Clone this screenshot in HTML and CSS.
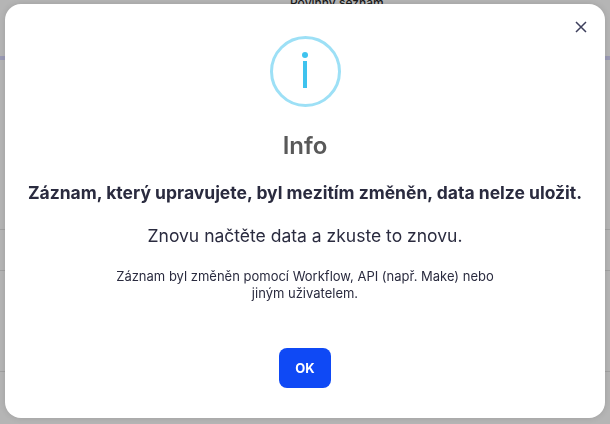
FILE: index.html
```html
<!DOCTYPE html>
<html lang="cs">
<head>
  <meta charset="UTF-8">
  <meta name="viewport" content="width=device-width, initial-scale=1.0">
  <title>Info</title>
  <link rel="stylesheet" href="styles.css">
</head>
<body>
  <div class="page">
    <div class="page-title">Povinný seznam</div>
    <div class="page-tabs"></div>
    <div class="page-row page-row-first"></div>
    <div class="page-row page-row-second"></div>
    <div class="page-row page-row-third"></div>
  </div>

  <div class="modal">
    <button class="modal-close" aria-label="Zavřít">
      <svg width="12" height="12" viewBox="0 0 12 12">
        <path d="M1 1L11 11M11 1L1 11" stroke="#3d3f5c" stroke-width="1.5" fill="none"/>
      </svg>
    </button>

    <div class="modal-icon">
      <span class="modal-icon-dot"></span>
      <span class="modal-icon-bar"></span>
    </div>

    <h2 class="modal-title">Info</h2>
    <p class="modal-lead">Záznam, který upravujete, byl mezitím změněn, data nelze uložit.</p>
    <p class="modal-text">Znovu načtěte data a zkuste to znovu.</p>
    <p class="modal-note">Záznam byl změněn pomocí Workflow, API (např. Make) nebo jiným uživatelem.</p>

    <button class="modal-ok">OK</button>
  </div>
</body>
</html>
```

FILE: styles.css
```css
html, body {
  height: 100%;
}
body {
  margin: 0;
  background: #b5b5b5;
  font-family: Inter, "Liberation Sans", sans-serif;
  overflow: hidden;
}
.page {
  display: flex;
  flex-direction: column;
}
.page-title {
  height: 4px;
  padding-left: 290px;
  line-height: 6px;
  overflow: hidden;
  font-size: 12px;
  font-weight: 500;
  color: #1a1a1a;
}
.page-tabs {
  height: 4px;
  margin-top: 52px;
  background: #9b9bb5;
}
.page-row {
  height: 1px;
  background: #a2a2a2;
}
.page-row-first {
  margin-top: 169px;
}
.page-row-second {
  margin-top: 40px;
}
.page-row-third {
  margin-top: 100px;
}
.modal {
  position: absolute;
  top: 4px;
  left: 5px;
  width: 600px;
  height: 414px;
  box-sizing: border-box;
  padding-top: 32px;
  display: flex;
  flex-direction: column;
  align-items: center;
  background: #fff;
  border-radius: 16px;
  box-shadow: 0 0 6px rgba(0,0,0,0.12);
  color: #2a2b3f;
  text-align: center;
  will-change: transform;
}
.modal-close {
  position: absolute;
  top: 17px;
  right: 18px;
  width: 12px;
  height: 12px;
  padding: 0;
  border: none;
  background: none;
  display: flex;
}
.modal-icon {
  width: 71px;
  height: 71px;
  box-sizing: border-box;
  border: 3px solid #9de0f6;
  border-radius: 50%;
  display: flex;
  flex-direction: column;
  align-items: center;
}
.modal-icon-dot {
  width: 6px;
  height: 6px;
  margin-top: 13px;
  border-radius: 50%;
  background: #3fc3ee;
}
.modal-icon-bar {
  width: 4px;
  height: 27px;
  margin-top: 3px;
  background: #3fc3ee;
}
.modal-title {
  margin: 22px 0 0;
  font-size: 24px;
  line-height: 34px;
  font-weight: 600;
  color: #595959;
}
.modal-lead {
  margin: 17px 0 0;
  font-size: 17.5px;
  line-height: 26px;
  font-weight: 700;
}
.modal-text {
  margin: 17px 0 0;
  font-size: 17.5px;
  line-height: 26px;
  font-weight: 400;
}
.modal-note {
  width: 390px;
  margin: 19px 0 0;
  font-size: 13px;
  line-height: 17px;
}
.modal-ok {
  width: 52px;
  height: 40px;
  margin-top: 46px;
  border: none;
  border-radius: 8px;
  background: #0f49f5;
  color: #fff;
  font-family: inherit;
  font-size: 13px;
  font-weight: 700;
}
```
